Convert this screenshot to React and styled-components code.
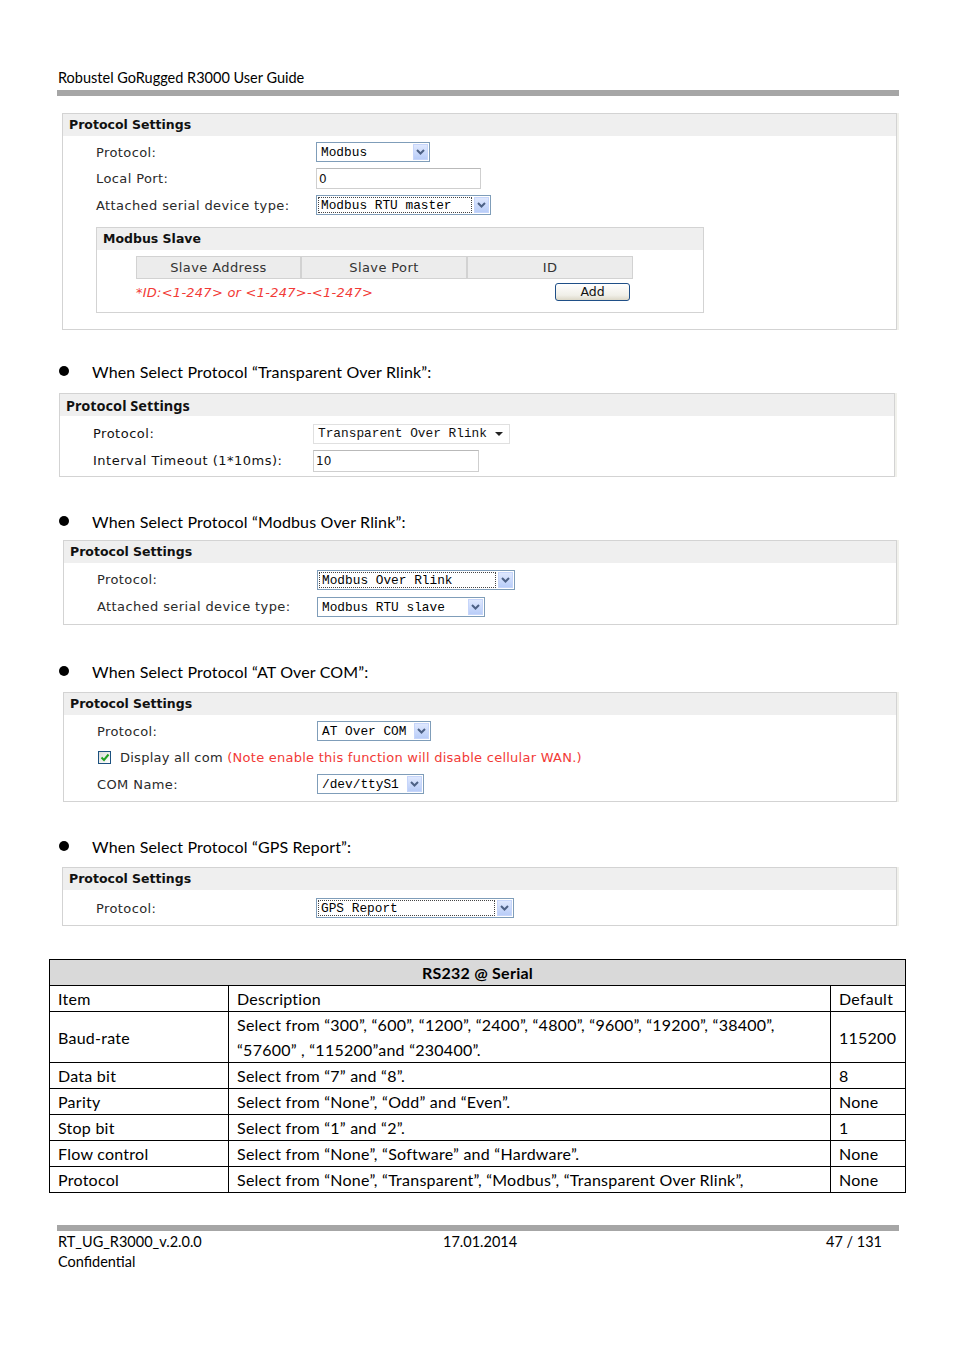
import styled, { createGlobalStyle } from "styled-components";

const GlobalStyle = createGlobalStyle`
  body {
    margin: 0;
    background: #ffffff;
  }
`;

const Page = styled.div`
  width: 954px;
  height: 1350px;
  box-sizing: border-box;
  padding: 69px 55px 0 57px;
  background: #ffffff;
  font-family: "Lato", "Liberation Sans", sans-serif;
  color: #000000;
  overflow: hidden;
`;

const DocHeader = styled.div`
  font-size: 14.5px;
  line-height: 18px;
  padding-left: 1px;
`;

const Rule = styled.div`
  height: 6px;
  margin-top: ${(p) => p.$mt}px;
  background: #a6a6a6;
`;

const Panel = styled.div`
  margin: ${(p) => p.$mt}px ${(p) => p.$mr}px 0 ${(p) => p.$ml}px;
  border: 1px solid #d3d3d3;
  box-shadow: 2px 0 0 #f1f1ec;
  padding-bottom: ${(p) => p.$pb}px;
  background: #ffffff;
`;

const PanelTitle = styled.div`
  height: 22px;
  line-height: 22px;
  padding-left: 6px;
  background: #efefef;
  font-family: ${(p) => (p.$alt ? '"Noto Sans", "DejaVu Sans", sans-serif' : '"DejaVu Sans", Verdana, sans-serif')};
  font-size: ${(p) => (p.$alt ? "14.5px" : "12.5px")};
  font-weight: bold;
  color: #111111;
`;

const Rows = styled.div`
  padding-top: ${(p) => p.$pt}px;
`;

const Row = styled.div`
  display: grid;
  grid-template-columns: 220px auto;
  align-items: center;
  height: ${(p) => p.$h || 26.5}px;
  padding-left: 33px;
  font-family: "DejaVu Sans", Verdana, sans-serif;
  font-size: 13px;
  letter-spacing: ${(p) => (p.$alt ? "0.5px" : "0.4px")};
  color: ${(p) => (p.$alt ? "#111111" : "#2a2a2a")};
`;

const CheckRow = styled.div`
  display: flex;
  align-items: center;
  gap: 9px;
  height: 26.5px;
  padding-left: 34px;
  font-family: "DejaVu Sans", Verdana, sans-serif;
  font-size: 13px;
  letter-spacing: 0.25px;
  color: #2a2a2a;
  white-space: nowrap;
`;

const RedText = styled.span`
  color: #f23a36;
  font-style: ${(p) => (p.$italic ? "italic" : "normal")};
`;

const Label = styled.span`
  white-space: nowrap;
`;

/* XP style select with blue arrow button */
const XpSelect = styled.div`
  display: flex;
  width: ${(p) => p.$w}px;
  height: 20px;
  box-sizing: border-box;
  border: 1px solid #7f9db9;
  background: #ffffff;
`;

const XpValue = styled.span`
  flex: 1;
  margin: 1px 2px 1px 1px;
  padding-left: 3px;
  font-family: "Liberation Mono", "Courier New", monospace;
  font-size: 12.8px;
  line-height: 17px;
  letter-spacing: 0;
  color: #000000;
  white-space: nowrap;
  overflow: hidden;
  outline: ${(p) => (p.$focus ? "1px dotted #444444" : "none")};
  outline-offset: -1px;
`;

const XpArrow = styled.span`
  width: 15px;
  margin: 1px 1px 1px 0;
  box-sizing: border-box;
  border: 1px solid #c6d5fa;
  background: linear-gradient(#dfe8fe, #b9cdf8);
  display: flex;
  align-items: center;
  justify-content: center;
`;

const PlainSelect = styled.div`
  display: flex;
  align-items: center;
  justify-content: space-between;
  width: ${(p) => p.$w}px;
  height: 20px;
  box-sizing: border-box;
  border: 1px solid #e0e0e0;
  padding: 0 6px 0 4px;
  font-family: "Liberation Mono", "Courier New", monospace;
  font-size: 12.8px;
  letter-spacing: 0;
  color: #111111;
  white-space: nowrap;
`;

const Caret = styled.span`
  width: 0;
  height: 0;
  border-left: 4px solid transparent;
  border-right: 4px solid transparent;
  border-top: 4px solid #222222;
`;

const TextInput = styled.input`
  width: ${(p) => p.$w}px;
  height: ${(p) => p.$h || 21}px;
  box-sizing: border-box;
  margin: 0;
  padding: 0 0 0 2px;
  border: 1px solid #cfcfcf;
  border-top-color: #b9b9b9;
  font-family: "DejaVu Sans", Verdana, sans-serif;
  font-size: 12px;
  color: #111111;
  background: #ffffff;
  outline: none;
`;

const SubPanel = styled.div`
  margin: 8px 0 0 33px;
  width: 606px;
  border: 1px solid #d3d3d3;
  padding-bottom: 6px;
`;

const SlaveTable = styled.div`
  display: grid;
  grid-template-columns: 165px 166px 166px;
  width: 497px;
  margin: 6px 0 0 39px;
`;

const SlaveHead = styled.div`
  height: 23px;
  box-sizing: border-box;
  border: 1px solid #d2d2d2;
  background: #ececec;
  text-align: center;
  line-height: 21px;
  font-family: "DejaVu Sans", Verdana, sans-serif;
  font-size: 13px;
  letter-spacing: 0.4px;
  color: #333333;
`;

const NoteRow = styled.div`
  display: flex;
  align-items: center;
  justify-content: space-between;
  width: 494px;
  height: 27px;
  margin-left: 39px;
  font-family: "DejaVu Sans", Verdana, sans-serif;
  font-size: 13px;
  letter-spacing: 0.25px;
`;

const AddButton = styled.button`
  width: 75px;
  height: 18px;
  margin: 0;
  padding: 0;
  border: 1px solid #1f4f87;
  border-radius: 3px;
  background: linear-gradient(#ffffff, #f0efe8 70%, #dcd8c8);
  font-family: "DejaVu Sans", Verdana, sans-serif;
  font-size: 12.5px;
  line-height: 14px;
  color: #111111;
`;

const CheckBox = styled.span`
  width: 13px;
  height: 13px;
  box-sizing: border-box;
  border: 1px solid #1c5180;
  background: linear-gradient(135deg, #dcdcd7, #ffffff);
  display: flex;
  align-items: center;
  justify-content: center;
`;

const Bullet = styled.div`
  display: flex;
  align-items: center;
  height: 20px;
  margin-top: ${(p) => p.$mt}px;
  padding-left: 2px;
  font-size: 16px;
  letter-spacing: 0.15px;
  white-space: nowrap;
`;

const Dot = styled.span`
  width: 10px;
  height: 10px;
  border-radius: 50%;
  background: #000000;
  margin-right: 23px;
`;

const SpecTable = styled.table`
  margin: 33px -6px 0 -8px;
  width: 856px;
  border-collapse: collapse;
  table-layout: fixed;
  font-size: 16px;
  letter-spacing: 0.25px;
`;

const Cell = styled.td`
  border: 1px solid #000000;
  padding: 0 8px;
  height: ${(p) => p.$h || 25}px;
  line-height: 25px;
  vertical-align: middle;
  text-align: ${(p) => (p.$center ? "center" : "left")};
  font-weight: ${(p) => (p.$bold ? "bold" : "normal")};
  background: ${(p) => (p.$shade ? "#d9d9d9" : "#ffffff")};
  box-sizing: border-box;
  white-space: nowrap;
`;

const Footer = styled.div`
  display: grid;
  grid-template-columns: 385px 1fr auto;
  margin-top: 1px;
  padding: 0 17px 0 1px;
  font-size: 14.5px;
  line-height: 20px;
`;

const Chevron = () => (
  <svg width="9" height="6" viewBox="0 0 9 6">
    <polyline points="1,1 4.5,4.5 8,1" fill="none" stroke="#4d6185" strokeWidth="2" />
  </svg>
);

const Check = () => (
  <svg width="10" height="9" viewBox="0 0 10 9">
    <polyline points="1.5,4.5 4,7 8.5,1.5" fill="none" stroke="#21a121" strokeWidth="2" />
  </svg>
);

const Select = ({ w, value, focus }) => (
  <XpSelect $w={w}>
    <XpValue $focus={focus}>{value}</XpValue>
    <XpArrow>
      <Chevron />
    </XpArrow>
  </XpSelect>
);

const specRows = [
  ["Data bit", "Select from “7” and “8”.", "8"],
  ["Parity", "Select from “None”, “Odd” and “Even”.", "None"],
  ["Stop bit", "Select from “1” and “2”.", "1"],
  ["Flow control", "Select from “None”, “Software” and “Hardware”.", "None"],
  ["Protocol", "Select from “None”, “Transparent”, “Modbus”, “Transparent Over Rlink”,", "None"],
];

const App = () => {
  return (
    <>
      <GlobalStyle />
      <Page>
        <DocHeader>Robustel GoRugged R3000 User Guide</DocHeader>
        <Rule $mt={3} />

        <Panel $mt={17} $ml={5} $mr={2} $pb={16.5}>
          <PanelTitle>Protocol Settings</PanelTitle>
          <Rows $pt={3}>
            <Row>
              <Label>Protocol:</Label>
              <Select w={114} value="Modbus" />
            </Row>
            <Row>
              <Label>Local Port:</Label>
              <TextInput $w={165} defaultValue="0" readOnly />
            </Row>
            <Row>
              <Label>Attached serial device type:</Label>
              <Select w={175} value="Modbus RTU master" focus />
            </Row>
          </Rows>
          <SubPanel>
            <PanelTitle>Modbus Slave</PanelTitle>
            <SlaveTable>
              <SlaveHead>Slave Address</SlaveHead>
              <SlaveHead>Slave Port</SlaveHead>
              <SlaveHead>ID</SlaveHead>
            </SlaveTable>
            <NoteRow>
              <RedText $italic>*ID:&lt;1-247&gt; or &lt;1-247&gt;-&lt;1-247&gt;</RedText>
              <AddButton>Add</AddButton>
            </NoteRow>
          </SubPanel>
        </Panel>

        <Bullet $mt={31}>
          <Dot />
          When Select Protocol “Transparent Over Rlink”:
        </Bullet>
        <Panel $mt={12} $ml={2} $mr={4} $pb={2}>
          <PanelTitle $alt>Protocol Settings</PanelTitle>
          <Rows $pt={4}>
            <Row $alt $h={27}>
              <Label>Protocol:</Label>
              <PlainSelect $w={197}>
                Transparent Over Rlink
                <Caret />
              </PlainSelect>
            </Row>
            <Row $alt $h={27}>
              <Label>Interval Timeout (1*10ms):</Label>
              <TextInput $w={166} $h={22} defaultValue="10" readOnly />
            </Row>
          </Rows>
        </Panel>

        <Bullet $mt={34}>
          <Dot />
          When Select Protocol “Modbus Over Rlink”:
        </Bullet>
        <Panel $mt={9} $ml={6} $mr={2} $pb={4}>
          <PanelTitle>Protocol Settings</PanelTitle>
          <Rows $pt={3}>
            <Row $h={27}>
              <Label>Protocol:</Label>
              <Select w={198} value="Modbus Over Rlink" focus />
            </Row>
            <Row $h={27}>
              <Label>Attached serial device type:</Label>
              <Select w={168} value="Modbus RTU slave" />
            </Row>
          </Rows>
        </Panel>

        <Bullet $mt={36}>
          <Dot />
          When Select Protocol “AT Over COM”:
        </Bullet>
        <Panel $mt={11} $ml={6} $mr={2} $pb={3.5}>
          <PanelTitle>Protocol Settings</PanelTitle>
          <Rows $pt={3}>
            <Row>
              <Label>Protocol:</Label>
              <Select w={114} value="AT Over COM" />
            </Row>
            <CheckRow>
              <CheckBox>
                <Check />
              </CheckBox>
              <span>
                Display all com <RedText>(Note enable this function will disable cellular WAN.)</RedText>
              </span>
            </CheckRow>
            <Row>
              <Label>COM Name:</Label>
              <Select w={107} value="/dev/ttyS1" />
            </Row>
          </Rows>
        </Panel>

        <Bullet $mt={34}>
          <Dot />
          When Select Protocol “GPS Report”:
        </Bullet>
        <Panel $mt={11} $ml={5} $mr={2} $pb={4}>
          <PanelTitle>Protocol Settings</PanelTitle>
          <Rows $pt={5}>
            <Row $h={26}>
              <Label>Protocol:</Label>
              <Select w={198} value="GPS Report" focus />
            </Row>
          </Rows>
        </Panel>

        <SpecTable>
          <colgroup>
            <col style={{ width: "179px" }} />
            <col style={{ width: "602px" }} />
            <col style={{ width: "75px" }} />
          </colgroup>
          <tbody>
            <tr>
              <Cell colSpan={3} $center $bold $shade $h={26}>
                RS232 @ Serial
              </Cell>
            </tr>
            <tr>
              <Cell $h={26}>Item</Cell>
              <Cell $h={26}>Description</Cell>
              <Cell $h={26}>Default</Cell>
            </tr>
            <tr>
              <Cell $h={51}>Baud-rate</Cell>
              <Cell $h={51}>
                Select from “300”, “600”, “1200”, “2400”, “4800”, “9600”, “19200”, “38400”,
                <br />
                “57600” , “115200”and “230400”.
              </Cell>
              <Cell $h={51}>115200</Cell>
            </tr>
            {specRows.map(([item, desc, def], i) => (
              <tr key={item}>
                <Cell $h={i === specRows.length - 1 ? 25 : 26}>{item}</Cell>
                <Cell $h={i === specRows.length - 1 ? 25 : 26}>{desc}</Cell>
                <Cell $h={i === specRows.length - 1 ? 25 : 26}>{def}</Cell>
              </tr>
            ))}
          </tbody>
        </SpecTable>

        <Rule $mt={32} />
        <Footer>
          <span>RT_UG_R3000_v.2.0.0</span>
          <span>17.01.2014</span>
          <span>47 / 131</span>
          <span>Confidential</span>
        </Footer>
      </Page>
    </>
  );
};

export default App;
